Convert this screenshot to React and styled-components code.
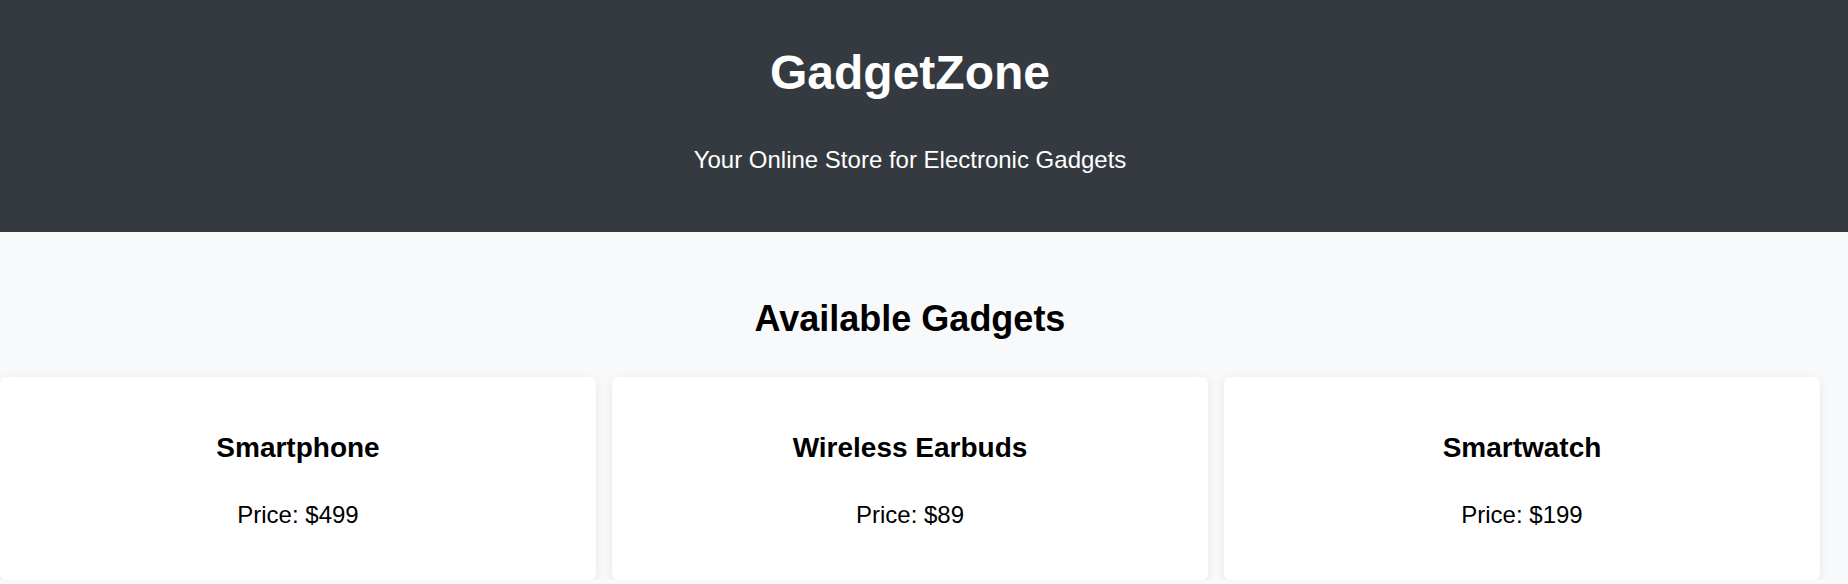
import styled, { createGlobalStyle } from "styled-components"

const GlobalStyle = createGlobalStyle`
    body {
        margin: 0;
        font-family: "Liberation Sans", Arial, sans-serif;
        background-color: #f8f9fa;
        color: #000;
    }
`

const Page = styled.div`
    display: flex;
    flex-direction: column;
`

const Header = styled.header`
    background-color: #343a40;
    color: #fff;
    text-align: center;
    height: 232px;
    box-sizing: border-box;
    padding: 45px 28px 0 0;
`

const Brand = styled.h1`
    font-size: 48px;
    font-weight: 700;
    margin: 0 0 46px;
`

const Tagline = styled.p`
    font-size: 24px;
    margin: 0;
`

const Main = styled.main`
    padding: 66px 28px 0 0;
`

const SectionTitle = styled.h2`
    font-size: 36px;
    font-weight: 700;
    text-align: center;
    margin: 0 0 37px;
`

const Grid = styled.div`
    display: grid;
    grid-template-columns: repeat(3, 1fr);
    gap: 16px;
`

const Card = styled.div`
    background-color: #fff;
    border-radius: 6px;
    box-shadow: 0 2px 10px rgba(0, 0, 0, 0.08);
    height: 203px;
    box-sizing: border-box;
    padding-top: 55px;
    text-align: center;
`

const CardTitle = styled.h3`
    font-size: 28px;
    font-weight: 700;
    margin: 0 0 37px;
`

const Price = styled.p`
    font-size: 24px;
    margin: 0;
`

const gadgets = [
    { name: "Smartphone", price: 499 },
    { name: "Wireless Earbuds", price: 89 },
    { name: "Smartwatch", price: 199 },
]

const App = () => {
    return (
        <Page>
            <GlobalStyle />
            <Header>
                <Brand>GadgetZone</Brand>
                <Tagline>Your Online Store for Electronic Gadgets</Tagline>
            </Header>
            <Main>
                <SectionTitle>Available Gadgets</SectionTitle>
                <Grid>
                    {gadgets.map((g) => (
                        <Card key={g.name}>
                            <CardTitle>{g.name}</CardTitle>
                            <Price>Price: ${g.price}</Price>
                        </Card>
                    ))}
                </Grid>
            </Main>
        </Page>
    )
}

export default App
